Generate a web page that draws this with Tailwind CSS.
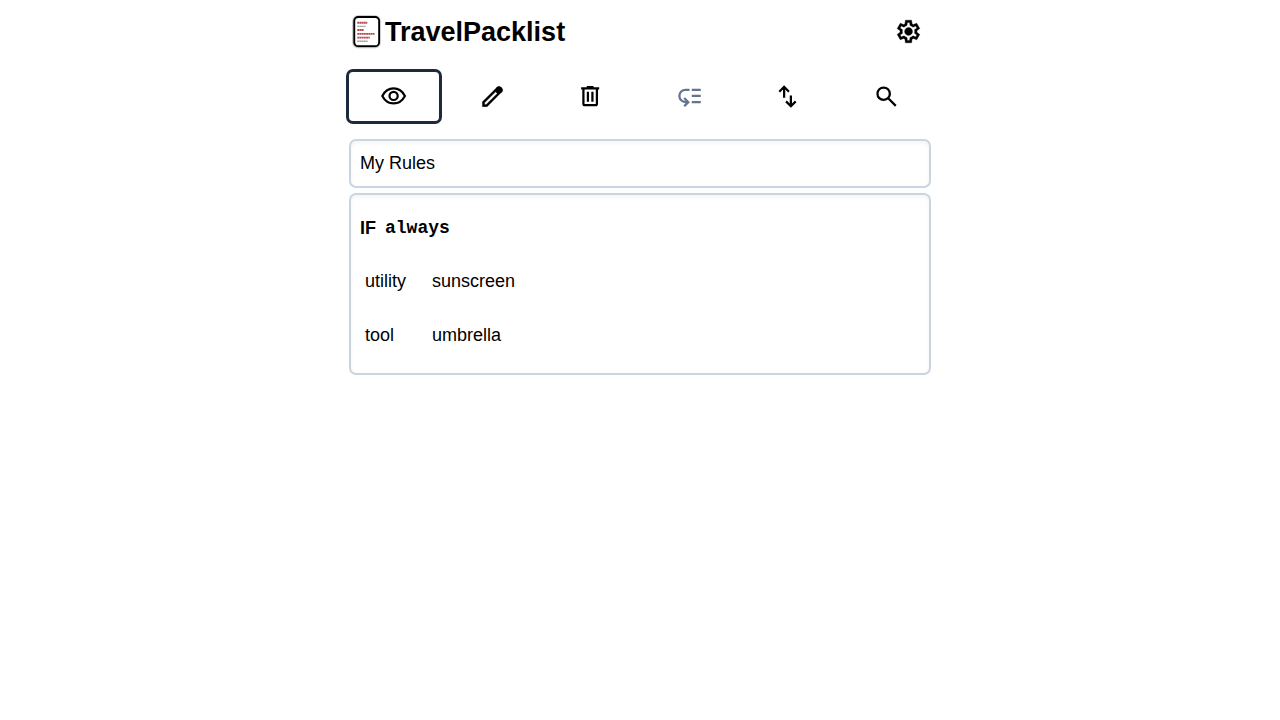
<!DOCTYPE html>
<html lang="en">
<head>
<meta charset="utf-8">
<meta name="viewport" content="width=device-width, initial-scale=1">
<title>TravelPacklist</title>
<script src="https://cdn.jsdelivr.net/npm/@tailwindcss/browser@4"></script>
</head>
<body class="bg-white text-black font-['Liberation_Sans',Arial,sans-serif] text-[18px] leading-[27px]">
<div class="mx-auto max-w-[588px]">
  <header class="flex h-16 items-center justify-between pl-[6px] pr-3">
    <a href="#" class="flex items-center gap-1">
      <svg class="h-[34px] w-[29px]" viewBox="0 0 29 34" aria-hidden="true">
        <rect x="0" y="0" width="29" height="33.5" rx="6" fill="#ddd"/>
        <rect x="0.7" y="0.7" width="27.6" height="32" rx="5.5" fill="#aaa"/>
        <rect x="2.300" y="2" width="24.800" height="29.200" rx="4" fill="#fff" stroke="#000" stroke-width="1.800"/>
        <g fill="none" stroke-width="1.900">
          <path stroke="#b5484e" stroke-dasharray="1.900 .3" d="M5.300 7.700h10M5.300 15h6.500M5.300 18.900h17.200M5.300 22.600h12.500"/>
          <path stroke="#999" stroke-width="1.400" stroke-dasharray="1.600 .4" d="M5.300 11.400h8.500M5.300 26.300h10.500"/>
        </g>
      </svg>
      <h1 class="text-[27px] font-bold leading-9">TravelPacklist</h1>
    </a>
    <button type="button" aria-label="Settings" class="flex pb-0.5">
      <svg class="size-[27px]" viewBox="0 -960 960 960" fill="currentColor" stroke="currentColor" stroke-width="14"><path d="m370-80-16-128q-13-5-24.500-12T307-235l-119 50L78-375l103-78q-1-7-1-13.500v-27q0-6.500 1-13.500L78-585l110-190 119 50q11-8 23-15t24-12l16-128h220l16 128q13 5 24.500 12t22.500 15l119-50 110 190-103 78q1 7 1 13.500v27q0 6.500-2 13.500l103 78-110 190-118-50q-11 8-23 15t-24 12L590-80H370Zm70-80h79l14-106q31-8 57.500-23.500T639-327l99 41 39-68-86-65q5-14 7-29.500t2-31.500q0-16-2-31.500t-7-29.500l86-65-39-68-99 42q-22-23-48.500-38.500T533-694l-13-106h-79l-14 106q-31 8-57.500 23.500T321-633l-99-41-39 68 86 64q-5 15-7 30t-2 32q0 16 2 31t7 30l-86 65 39 68 99-42q22 23 48.500 38.500T427-266l13 106Zm42-180q58 0 99-41t41-99q0-58-41-99t-99-41q-59 0-99.500 41T342-480q0 58 40.500 99t99.500 41Z"/></svg>
    </button>
  </header>

  <nav aria-label="Rule actions" class="mt-[5px] flex justify-between">
    <button type="button" aria-label="View" aria-pressed="true" class="flex h-[55px] w-24 items-center justify-center rounded-[7px] border-3 border-slate-800">
      <svg class="size-[27px]" viewBox="0 0 27 27" fill="none" stroke="currentColor" stroke-width="2.200"><path d="M1.300 12.900C3.800 8.200 7.800 5.400 12.600 5.400S21.400 8.200 23.900 12.900C21.400 17.600 17.400 20.400 12.600 20.400S3.800 17.600 1.300 12.900Z"/><circle cx="12.600" cy="12.900" r="4.100"/></svg>
    </button>
    <button type="button" aria-label="Edit" class="flex h-[55px] w-24 items-center justify-center">
      <svg class="size-[27px]" viewBox="0 -960 960 960" fill="currentColor" stroke="currentColor" stroke-width="10"><path d="M200-200h57l391-391-57-57-391 391v57Zm-80 80v-170l528-527q12-11 26.500-17t30.500-6q16 0 31 6t26 18l55 56q12 11 17.500 26t5.500 30q0 16-5.500 30.500T817-647L290-120H120Z"/><circle cx="716" cy="-716" r="115"/></svg>
    </button>
    <button type="button" aria-label="Delete" class="flex h-[55px] w-24 items-center justify-center">
      <svg class="size-[27px]" viewBox="12 -950 960 960" fill="currentColor"><path d="M280-120q-33 0-56.500-23.500T200-200v-520h-40v-80h200v-40h240v40h200v80h-40v520q0 33-23.500 56.500T680-120H280Zm400-600H280v520h400v-520ZM360-280h80v-360h-80v360Zm160 0h80v-360h-80v360Z"/></svg>
    </button>
    <button type="button" aria-label="Move" disabled class="flex h-[55px] w-24 items-center justify-center text-slate-500">
      <svg class="size-[27px]" viewBox="0 0 24 24" fill="none" stroke="currentColor" stroke-width="2"><path d="M14 6h8M14 11.500h8M14 17h8M12 6H8.500a5.500 5.500 0 0 0 0 11H10M7.300 13.400L10.900 17l-3.600 3.600"/></svg>
    </button>
    <button type="button" aria-label="Sort" class="flex h-[55px] w-24 items-center justify-center">
      <svg class="size-[27px]" viewBox="0 -960 960 960" fill="currentColor"><path d="M320-440v-287L217-624l-57-56 200-200 200 200-57 56-103-103v287h-80ZM600-80 400-280l57-56 103 103v-287h80v287l103-103 57 56L600-80Z"/></svg>
    </button>
    <button type="button" aria-label="Search" class="flex h-[55px] w-24 items-center justify-center">
      <svg class="size-[27px]" viewBox="-34 -960 960 960" fill="currentColor"><path d="M784-120 532-372q-30 24-69 38t-83 14q-109 0-184.500-75.500T120-580q0-109 75.500-184.500T380-840q109 0 184.500 75.500T640-580q0 44-14 83t-38 69l252 252-56 56ZM380-400q75 0 127.500-52.500T560-580q0-75-52.500-127.500T380-760q-75 0-127.500 52.500T200-580q0 75 52.500 127.500T380-400Z"/></svg>
    </button>
  </nav>

  <main class="mt-[15px] flex flex-col gap-[5px] px-[3px]">
    <section class="rounded-[7px] border-2 border-slate-300 px-[9px] py-[9px] inset-shadow-sm">
      <h2>My Rules</h2>
    </section>
    <section class="rounded-[7px] border-2 border-slate-300 px-[9px] pt-5 pb-[11px] inset-shadow-sm">
      <h3 class="flex gap-[9px] font-bold"><span>IF</span><code class="font-['Liberation_Mono',monospace]">always</code></h3>
      <table class="mt-3">
        <tbody>
          <tr class="h-[54px]"><td class="w-[72px] pl-[5px]">utility</td><td>sunscreen</td></tr>
          <tr class="h-[54px]"><td class="pl-[5px]">tool</td><td>umbrella</td></tr>
        </tbody>
      </table>
    </section>
  </main>
</div>
</body>
</html>
